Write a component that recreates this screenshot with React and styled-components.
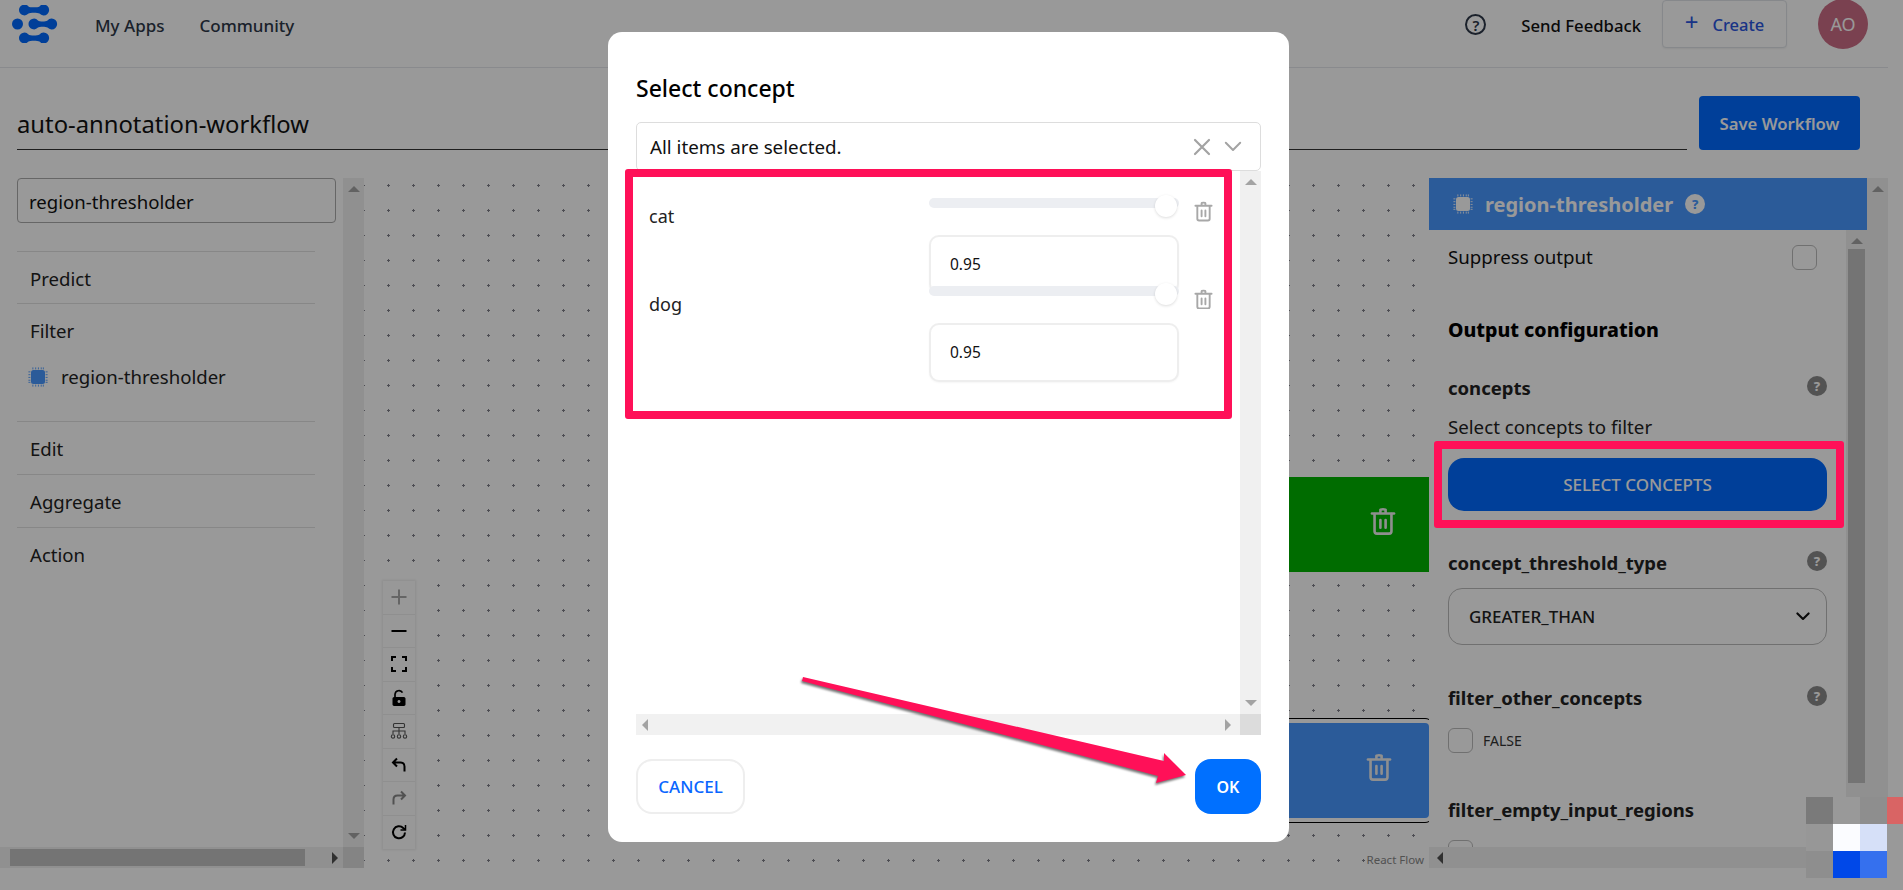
import React from 'react';
import styled, { createGlobalStyle } from 'styled-components';

const GlobalStyle = createGlobalStyle`
  html, body {
    margin: 0;
    height: 100%;
    overflow: hidden;
    background: #fff;
    font-family: "Noto Sans", "Liberation Sans", sans-serif;
    color: #111;
  }
  * { box-sizing: border-box; }
`;

const PINK = '#ff1058';

const Page = styled.div`
  width: 1888px;
  height: 890px;
  display: flex;
  flex-direction: column;
`;

const Header = styled.header`
  height: 68px;
  padding: 0 20px 19px 12px;
  border-bottom: 1px solid #e4e7ec;
  display: flex;
  align-items: center;
`;

const NavLink = styled.a`
  font-size: 17px;
  font-weight: 500;
  color: #2d3748;
  margin-left: ${p => p.$gap}px;
  padding-top: 2px;
`;

const HeaderRight = styled.div`
  margin-left: auto;
  display: flex;
  align-items: center;
`;

const OutlineHelp = styled.span`
  width: 21px;
  height: 21px;
  border: 2px solid #2d3748;
  border-radius: 50%;
  display: flex;
  align-items: center;
  justify-content: center;
  font-size: 15px;
  font-weight: 600;
  color: #2d3748;
  margin: 1px 35px 0 0;
`;

const FeedbackText = styled.span`
  font-size: 16.700px;
  font-weight: 500;
  color: #111;
  margin-right: 21px;
  padding-top: 2px;
`;

const CreateButton = styled.button`
  width: 125px;
  height: 48px;
  background: #fff;
  border: 1px solid #dfe3e8;
  border-radius: 4px;
  box-shadow: 0 1px 2px rgba(0,0,0,.06);
  color: #2a55e0;
  font: 500 16.500px "Noto Sans", sans-serif;
  display: flex;
  align-items: center;
  justify-content: center;
  gap: 14px;
  margin-right: 31px;
  padding-top: 2px;
  span:first-child { font-size: 24px; font-weight: 400; line-height: 20px; margin-top: -6px; }
`;

const Avatar = styled.div`
  width: 50px;
  height: 50px;
  border-radius: 50%;
  background: #cc6d85;
  color: #fff;
  font-size: 18px;
  display: flex;
  align-items: center;
  justify-content: center;
`;

const TitleRow = styled.div`
  padding: 28px 28px 28px 17px;
  display: flex;
  gap: 12px;
  align-items: flex-end;
`;

const TitleField = styled.div`
  flex: 1;
  height: 54px;
  border-bottom: 1px solid #333;
  font-size: 23.800px;
  line-height: 30px;
  padding-top: 13px;
  color: #111;
`;

const SaveButton = styled.button`
  width: 161px;
  height: 54px;
  background: #006aff;
  color: #fff;
  border: 0;
  border-radius: 4px;
  font: 600 16.700px "Noto Sans", sans-serif;
`;

const Workspace = styled.div`
  height: 690px;
  display: flex;
`;

const LeftPanel = styled.aside`
  width: 364px;
  display: flex;
  flex-direction: column;
`;

const PanelRow = styled.div`
  flex: 1;
  min-height: 0;
  display: flex;
`;

const LeftContent = styled.div`
  width: 343px;
  padding-left: 17px;
`;

const SearchBox = styled.div`
  width: 319px;
  height: 45px;
  border: 1px solid #aaa;
  border-radius: 4px;
  font-size: 18.600px;
  line-height: 45px;
  padding-left: 11px;
  margin-bottom: 28px;
`;

const Category = styled.div`
  width: 298px;
  border-top: 1px solid #e2e2e2;
  padding: 14px 13px 0;
  height: ${p => p.$h}px;
  font-size: 18.600px;
  line-height: 26px;
  color: #222;
`;

const CategoryItem = styled.div`
  display: flex;
  align-items: center;
  gap: 13px;
  margin: 20px 0 0 -2px;
  color: #222;
`;

const VTrack = styled.div`
  width: 21px;
  background: ${p => p.$bg || '#f1f1f1'};
  flex: none;
  display: flex;
  flex-direction: column;
  align-items: center;
  padding: 8px 0;
`;

const VThumb = styled.div`
  width: 17px;
  height: 534px;
  margin-top: 5px;
  background: #c1c1c1;
`;

const Push = styled.div`
  flex: 1;
`;

const HTrack = styled.div`
  height: 21px;
  background: #f1f1f1;
  display: flex;
  align-items: center;
  flex: none;
`;

const HThumb = styled.div`
  width: 295px;
  height: 17px;
  margin-left: 10px;
  background: #c1c1c1;
`;

const Corner = styled.div`
  width: 21px;
  height: 21px;
  background: #dcdcdc;
  margin-left: ${p => p.$flush ? '0' : 'auto'};
`;

const Arrow = styled.span`
  width: 0;
  height: 0;
  flex: none;
  margin: ${p => p.$m || '0'};
  ${p => p.$dir === 'up' && `border: 4px solid transparent; border-top: 0; border-left-width: 6px; border-right-width: 6px; border-bottom: 6px solid ${p.$c || '#a3a3a3'};`}
  ${p => p.$dir === 'down' && `border: 4px solid transparent; border-bottom: 0; border-left-width: 6px; border-right-width: 6px; border-top: 6px solid ${p.$c || '#a3a3a3'};`}
  ${p => p.$dir === 'left' && `border: 6px solid transparent; border-left: 0; border-right: 6px solid ${p.$c || '#505050'};`}
  ${p => p.$dir === 'right' && `border: 6px solid transparent; border-right: 0; border-left: 6px solid ${p.$c || '#505050'};`}
`;

const Canvas = styled.main`
  flex: 1;
  position: relative;
  overflow: hidden;
  background-image: radial-gradient(circle at 1.500px 1.500px, #81818a 1.200px, transparent 1.400px);
  background-size: 25px 25px;
  background-position: 23px 6px;
`;

const FlowNode = styled.div`
  position: absolute;
  right: 0;
  top: ${p => p.$top}px;
  width: 300px;
  height: ${p => p.$h}px;
  background: ${p => p.$bg};
  display: flex;
  align-items: center;
  justify-content: flex-end;
  padding: 0 ${p => p.$pad}px 7px 0;
  border-radius: ${p => p.$outlined ? '0 4px 4px 0' : '0'};
  ${p => p.$outlined && `box-shadow: 0 0 0 4px #fff, 0 0 0 5px #000;`}
`;

const FlowControls = styled.div`
  position: absolute;
  left: 19px;
  top: 403px;
  width: 32px;
  background: #fefefe;
  box-shadow: 0 0 2px 1px rgba(0,0,0,.08);
`;

const ControlButton = styled.div`
  height: 33.500px;
  border-bottom: 1px solid #eee;
  display: flex;
  align-items: center;
  justify-content: center;
  &:last-child { border-bottom: 0; }
`;

const Attribution = styled.span`
  position: absolute;
  right: 3px;
  bottom: 1px;
  font-size: 11.500px;
  color: #888;
  background: #fff;
  padding: 0 2px;
`;

const RightPanel = styled.aside`
  width: 459px;
  display: flex;
  flex-direction: column;
  background: #fff;
`;

const RightMain = styled.div`
  width: 438px;
  display: flex;
  flex-direction: column;
`;

const PanelHeader = styled.div`
  height: 52px;
  background: #4898ff;
  color: #fff;
  display: flex;
  align-items: center;
  padding-left: 24px;
  font-size: 20px;
  font-weight: 700;
  gap: 12px;
`;

const FilledHelp = styled.span`
  width: 20px;
  height: 20px;
  border-radius: 50%;
  background: ${p => p.$bg || '#8a8a8a'};
  color: ${p => p.$fg || '#fff'};
  display: flex;
  align-items: center;
  justify-content: center;
  font-size: 13px;
  font-weight: 800;
  flex: none;
`;

const RightBody = styled.div`
  width: 417px;
  padding: 14px 19px 0;
  overflow: hidden;
`;

const SuppressRow = styled.div`
  display: flex;
  justify-content: space-between;
  align-items: center;
  font-size: 18.700px;
  line-height: 26px;
  height: 26px;
  padding-right: 10px;
`;

const CheckBox = styled.span`
  display: block;
  width: 25px;
  height: 25px;
  border: 1px solid #bbb;
  border-radius: 6px;
  flex: none;
`;

const SectionTitle = styled.div`
  font-size: 19.500px;
  font-weight: 800;
  line-height: 26px;
  color: #000;
  margin-top: ${p => p.$top}px;
`;

const FieldHead = styled.div`
  display: flex;
  justify-content: space-between;
  align-items: center;
  height: 26px;
  padding-bottom: 2px;
  font-size: 18.500px;
  font-weight: 700;
  color: #222;
  margin-top: ${p => p.$top}px;
  ${FilledHelp} { margin-top: -2px; }
`;

const HelpText = styled.div`
  font-size: 18.700px;
  line-height: 26px;
  margin-top: 13px;
  color: #222;
`;

const ButtonFrame = styled.div`
  position: relative;
  margin-top: 18px;
`;

const SelectConcepts = styled.button`
  width: 100%;
  height: 53px;
  background: #006aff;
  color: #fff;
  border: 0;
  border-radius: 16px;
  font: 500 17px "Noto Sans", sans-serif;
  display: block;
`;

/* annotation painted on the screenshot, so it sits above the modal backdrop */
const PinkFrame = styled.div`
  position: absolute;
  left: ${p => p.$left}px;
  top: ${p => p.$top}px;
  width: ${p => p.$w}px;
  height: ${p => p.$h}px;
  border: 8px solid ${PINK};
  border-radius: 3px;
  pointer-events: none;
  z-index: 12;
`;

const SelectBox = styled.div`
  height: 57px;
  margin-top: 12px;
  border: 1px solid #bbb;
  border-radius: 14px;
  display: flex;
  align-items: center;
  justify-content: space-between;
  padding: 0 16px 0 20px;
  font-size: 17px;
  font-weight: 500;
  color: #222;
`;

const CheckRow = styled.div`
  display: flex;
  align-items: center;
  gap: 10px;
  margin-top: 17px;
  font-size: 14px;
  color: #333;
`;

const Watermark = styled.div`
  position: fixed;
  left: 1806px;
  top: 797px;
  display: grid;
  grid-template-columns: 27px 27px 27px 16px;
  grid-auto-rows: 27px;
  z-index: 20;
`;

const Pixel = styled.div`
  background: ${p => p.$c};
`;

const Overlay = styled.div`
  position: fixed;
  inset: 0;
  background: rgba(0, 0, 0, .4);
  padding: 32px 0 0 608px;
  z-index: 10;
`;

const Dialog = styled.section`
  width: 681px;
  height: 810px;
  background: #fff;
  border-radius: 14px;
  padding: 40px 28px 28px 28px;
`;

const DialogTitle = styled.h2`
  margin: 0 0 18px;
  font-size: 23px;
  font-weight: 500;
  line-height: 32px;
  color: #000;
`;

const MultiSelect = styled.div`
  height: 49px;
  border: 1px solid #ddd;
  border-radius: 5px;
  display: flex;
  align-items: center;
  padding: 0 18px 0 13px;
  font-size: 18.800px;
  color: #111;
  gap: 13px;
  span { flex: 1; }
`;

const ListPane = styled.div`
  position: relative;
  height: 564px;
  display: flex;
  flex-direction: column;
`;

const ListBody = styled.div`
  flex: 1;
  min-width: 0;
  padding: 27px 0 0 13px;
`;

const ConceptRow = styled.div`
  height: 87.500px;
  display: flex;
`;

const ConceptName = styled.div`
  width: 280px;
  font-size: 18px;
  line-height: 26px;
  padding-top: 5px;
  color: #222;
`;

const ConceptControl = styled.div`
  width: 250px;
  position: relative;
`;

const SliderTrack = styled.div`
  height: 10px;
  border-radius: 5px;
  background: #eceef2;
  position: relative;
  z-index: 1;
`;

const SliderThumb = styled.span`
  position: absolute;
  right: 2px;
  top: -3px;
  width: 22px;
  height: 22px;
  border-radius: 50%;
  background: #fff;
  box-shadow: 0 1px 3px rgba(0,0,0,.14);
`;

const ValueBox = styled.div`
  height: 59px;
  margin-top: 27px;
  border: 2px solid #eee;
  border-radius: 10px;
  background: #fff;
  font-size: 15.500px;
  font-weight: 400;
  line-height: 55px;
  padding-left: 19px;
  box-shadow: 0 1px 2px rgba(0,0,0,.04);
  color: #111;
`;

const TrashSlot = styled.div`
  margin: 3px 0 0 15px;
`;

const Footer = styled.div`
  margin-top: 24px;
  display: flex;
  justify-content: space-between;
`;

const CancelButton = styled.button`
  width: 109px;
  height: 55px;
  background: #fff;
  border: 2px solid #eee;
  border-radius: 16px;
  color: #0a66ff;
  font: 500 17px "Noto Sans", sans-serif;
`;

const OkButton = styled.button`
  width: 66px;
  height: 55px;
  background: #0070ff;
  border: 0;
  border-radius: 16px;
  color: #fff;
  font: 600 16px "Noto Sans", sans-serif;
`;

const ArrowMark = styled.svg`
  position: fixed;
  left: 795px;
  top: 670px;
  width: 400px;
  height: 120px;
  filter: drop-shadow(-1px 2px 1px rgba(0,0,0,.55));
  z-index: 15;
`;

const Logo = () => (
  <svg width="46" height="38" viewBox="12 5 46 38" fill="#006aff">
    <path d="M19 10a5.500 5.500 0 0 1 9.500-3.600c1.500 1.300 9 1.300 11 0A5.500 5.500 0 1 1 39.500 13.600c-2-1.300-9.500-1.300-11 0A5.500 5.500 0 0 1 19 10Z" />
    <circle cx="17.500" cy="24" r="5.500" />
    <path d="M28.500 24a5.500 5.500 0 0 1 9.500-3.600c1.500 1.300 7.500 1.300 9.500 0A5.500 5.500 0 1 1 47.500 27.600c-2-1.300-8-1.300-9.500 0A5.500 5.500 0 0 1 28.500 24Z" />
    <path d="M19 38a5.500 5.500 0 0 1 9.500-3.600c1.500 1.300 9 1.300 11 0A5.500 5.500 0 1 1 39.500 41.600c-2-1.300-9.500-1.300-11 0A5.500 5.500 0 0 1 19 38Z" />
  </svg>
);

const Chip = ({ color }) => (
  <svg width="20" height="20" viewBox="0 0 20 20" fill={color}>
    <rect x="3" y="3" width="14" height="14" rx="2.500" />
    {[4.500, 7.300, 10.100, 12.900, 15].map(v => (
      <g key={v} opacity=".8">
        <rect x={v - .2} y="0.400" width="1.100" height="2" />
        <rect x={v - .2} y="17.600" width="1.100" height="2" />
        <rect x="0.400" y={v - .2} width="2" height="1.100" />
        <rect x="17.600" y={v - .2} width="2" height="1.100" />
      </g>
    ))}
  </svg>
);

const Trash = ({ size, color }) => (
  <svg width={size} height={size * 1.1} viewBox="0 0 20 22" fill="none" stroke={color} strokeWidth="2" strokeLinecap="round" strokeLinejoin="round">
    <path d="M1.500 5h17" />
    <path d="M8 4V2.200c0-.6 4-.6 4 0V4" />
    <path d="M3.500 5.500v13.200c0 1 .8 1.800 1.800 1.800h9.400c1 0 1.800-.8 1.800-1.800V5.500" />
    <path d="M8 10v6M12 10v6" />
  </svg>
);

const CloseIcon = () => (
  <svg width="18" height="18" viewBox="0 0 18 18" stroke="#a3a3a3" strokeWidth="2.200" strokeLinecap="round">
    <path d="M2 2l14 14M16 2L2 16" />
  </svg>
);

const Chevron = ({ color, w, sw }) => (
  <svg width={w} height={w * .6} viewBox="0 0 20 12" fill="none" stroke={color} strokeWidth={sw} strokeLinecap="round" strokeLinejoin="round">
    <path d="M2 2l8 8 8-8" />
  </svg>
);

const controlIcons = [
  <path key="plus" d="M9 1.500v15M1.500 9h15" stroke="#a8a8a8" strokeWidth="2" fill="none" />,
  <path key="minus" d="M1.500 9h15" stroke="#000" strokeWidth="2" fill="none" />,
  <path key="fit" d="M2 6V2h4M12 2h4v4M16 12v4h-4M6 16H2v-4" stroke="#000" strokeWidth="2" fill="none" />,
  <g key="lock"><path d="M5 8V5.500a4 4 0 0 1 7.500-1.800" stroke="#000" strokeWidth="1.700" fill="none" /><path fillRule="evenodd" d="M4 8h10c.7 0 1.500.8 1.500 1.500v6c0 .7-.8 1.500-1.500 1.500H4c-.7 0-1.500-.8-1.500-1.500v-6C2.500 8.800 3.300 8 4 8Z M9 11a1.500 1.500 0 1 0 .01 0Z" fill="#000" /></g>,
  <g key="tree" stroke="#555" strokeWidth="1.100" fill="none"><rect x="3.500" y="1.500" width="11" height="4" rx="1" /><path d="M9 5.500V12M3 12V9h12v3" /><circle cx="3" cy="14.500" r="1.700" /><circle cx="9" cy="14.500" r="1.700" /><circle cx="15" cy="14.500" r="1.700" /></g>,
  <path key="undo" d="M7 2.500 3 6.500l4 4M3.500 6.500h7c2.500 0 4 1.500 4 4v5" stroke="#000" strokeWidth="2" fill="none" />,
  <path key="redo" d="M11 2.500l4 4-4 4M14.500 6.500h-7c-2.500 0-4 1.500-4 4v5" stroke="#888" strokeWidth="2" fill="none" />,
  <g key="reset" stroke="#000" strokeWidth="2" fill="none"><path d="M15 9.500a6 6 0 1 1-1.800-4.500L15 6.500" /><path d="M15.500 2v5h-5" strokeWidth="1.500" /></g>,
];

const concepts = ['cat', 'dog'];

const pixels = [
  '#7a7a7a', '#999999', '#8e8e8e', '#d96464',
  '#979797', '#fbfcff', '#d6e0f8', '#999999',
  '#8e8e8e', '#0048e8', '#3570ee', '#999999',
];

const App = () => (
  <>
    <GlobalStyle />
    <Page>
      <Header>
        <Logo />
        <NavLink $gap={37}>My Apps</NavLink>
        <NavLink $gap={35}>Community</NavLink>
        <HeaderRight>
          <OutlineHelp>?</OutlineHelp>
          <FeedbackText>Send Feedback</FeedbackText>
          <CreateButton><span>+</span><span>Create</span></CreateButton>
          <Avatar>AO</Avatar>
        </HeaderRight>
      </Header>
      <TitleRow>
        <TitleField>auto-annotation-workflow</TitleField>
        <SaveButton>Save Workflow</SaveButton>
      </TitleRow>
      <Workspace>
        <LeftPanel>
          <PanelRow>
            <LeftContent>
              <SearchBox>region-thresholder</SearchBox>
              <Category $h={52}>Predict</Category>
              <Category $h={118}>
                Filter
                <CategoryItem><Chip color="#4898ff" />region-thresholder</CategoryItem>
              </Category>
              <Category $h={53}>Edit</Category>
              <Category $h={53}>Aggregate</Category>
              <Category $h={53}>Action</Category>
            </LeftContent>
            <VTrack>
              <Arrow $dir="up" />
              <Push />
              <Arrow $dir="down" />
            </VTrack>
          </PanelRow>
          <HTrack>
            <HThumb />
            <Arrow $dir="right" $m="0 0 0 27px" />
            <Corner />
          </HTrack>
        </LeftPanel>
        <Canvas>
          <FlowNode $top={299} $h={95} $bg="#00b400" $pad={33}><Trash size={26} color="#eee" /></FlowNode>
          <FlowNode $top={545} $h={95} $bg="#4898ff" $pad={37} $outlined><Trash size={26} color="#eee" /></FlowNode>
          <FlowControls>
            {controlIcons.map(icon => (
              <ControlButton key={icon.key}>
                <svg width="18" height="18" viewBox="0 0 18 18">{icon}</svg>
              </ControlButton>
            ))}
          </FlowControls>
          <Attribution>React Flow</Attribution>
        </Canvas>
        <RightPanel>
          <PanelRow>
            <RightMain>
              <PanelHeader>
                <Chip color="#fff" />
                region-thresholder
                <FilledHelp $bg="#fff" $fg="#4898ff">?</FilledHelp>
              </PanelHeader>
              <PanelRow>
                <RightBody>
                  <SuppressRow>Suppress output<CheckBox /></SuppressRow>
                  <SectionTitle $top={47}>Output configuration</SectionTitle>
                  <FieldHead $top={32}>concepts<FilledHelp>?</FilledHelp></FieldHead>
                  <HelpText>Select concepts to filter</HelpText>
                  <ButtonFrame>
                    <SelectConcepts>SELECT CONCEPTS</SelectConcepts>
                    <PinkFrame $left={-14} $top={-17} $w={410} $h={87} />
                  </ButtonFrame>
                  <FieldHead $top={39}>concept_threshold_type<FilledHelp>?</FilledHelp></FieldHead>
                  <SelectBox>GREATER_THAN<Chevron color="#111" w={14} sw={3} /></SelectBox>
                  <FieldHead $top={40}>filter_other_concepts<FilledHelp>?</FilledHelp></FieldHead>
                  <CheckRow><CheckBox />FALSE</CheckRow>
                  <FieldHead $top={44}>filter_empty_input_regions</FieldHead>
                  <CheckRow><CheckBox /></CheckRow>
                </RightBody>
                <VTrack>
                  <Arrow $dir="up" />
                  <VThumb />
                </VTrack>
              </PanelRow>
            </RightMain>
            <VTrack><Arrow $dir="up" /></VTrack>
          </PanelRow>
          <HTrack>
            <Arrow $dir="left" $m="0 0 0 8px" />
          </HTrack>
        </RightPanel>
      </Workspace>
    </Page>
    <Overlay>
      <Dialog>
        <DialogTitle>Select concept</DialogTitle>
        <MultiSelect>
          <span>All items are selected.</span>
          <CloseIcon />
          <Chevron color="#a3a3a3" w={18} sw={2.200} />
        </MultiSelect>
        <ListPane>
          <PanelRow>
            <ListBody>
              {concepts.map(name => (
                <ConceptRow key={name}>
                  <ConceptName>{name}</ConceptName>
                  <ConceptControl>
                    <SliderTrack><SliderThumb /></SliderTrack>
                    <ValueBox>0.95</ValueBox>
                  </ConceptControl>
                  <TrashSlot><Trash size={19} color="#a8a8a8" /></TrashSlot>
                </ConceptRow>
              ))}
            </ListBody>
            <VTrack $bg="#f0f0f0">
              <Arrow $dir="up" />
              <Push />
              <Arrow $dir="down" />
            </VTrack>
          </PanelRow>
          <HTrack>
            <Arrow $dir="left" $c="#a3a3a3" $m="0 0 0 6px" />
            <Arrow $dir="right" $c="#a3a3a3" $m="0 9px 0 auto" />
            <Corner $flush />
          </HTrack>
          <PinkFrame $left={-11} $top={-2} $w={607} $h={250} />
        </ListPane>
        <Footer>
          <CancelButton>CANCEL</CancelButton>
          <OkButton>OK</OkButton>
        </Footer>
      </Dialog>
    </Overlay>
    <ArrowMark viewBox="0 0 400 120">
      <polygon fill={PINK} points="8,7 369,91 369,83 391,105 361,113 363,106 7,11" />
    </ArrowMark>
    <Watermark>
      {pixels.map((c, i) => <Pixel key={i} $c={c} />)}
    </Watermark>
  </>
);

export default App;
